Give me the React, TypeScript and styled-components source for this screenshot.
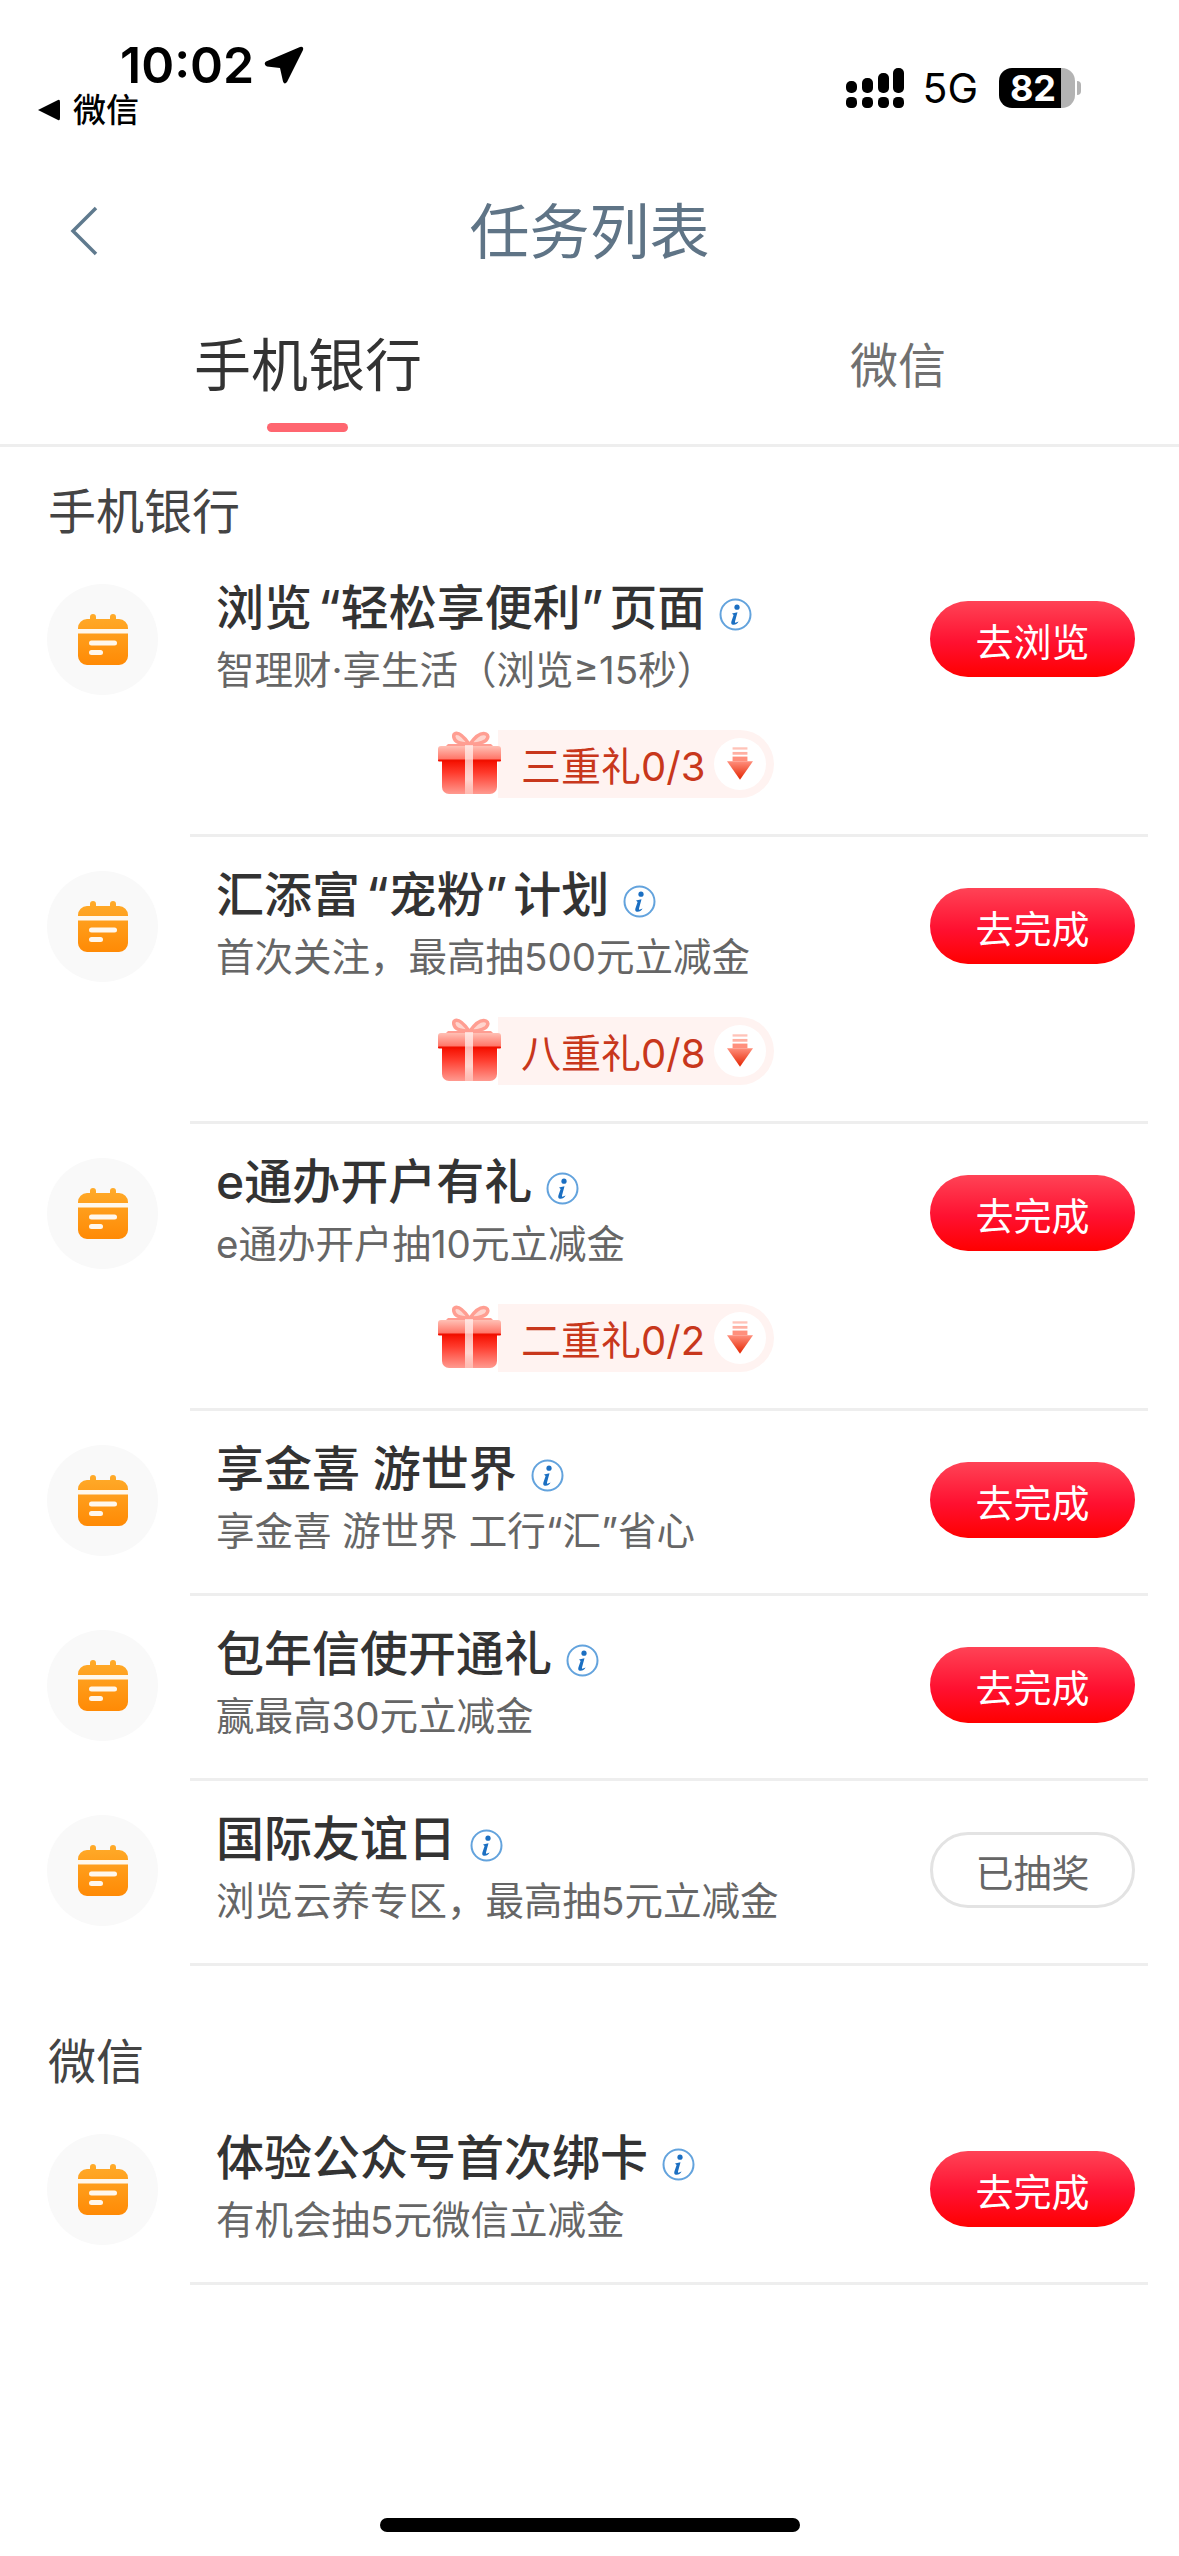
import React from "react";
import styled, { createGlobalStyle } from "styled-components";

const Global = createGlobalStyle`
  html, body { margin: 0; padding: 0; background: #fff; }
  body { font-family: Inter, "Noto Sans CJK SC", sans-serif; }
`;

const Page = styled.div`
  width: 1179px;
  min-height: 2556px;
  display: flex;
  flex-direction: column;
  background: #fff;
  overflow: hidden;
`;

const StatusBar = styled.div`
  height: 150px;
  display: flex;
  justify-content: space-between;
  align-items: flex-start;
  box-sizing: border-box;
  padding: 40px 98px 0 38px;
  color: #000;
`;
const StatusLeft = styled.div`
  display: flex;
  flex-direction: column;
`;
const TimeRow = styled.div`
  display: flex;
  align-items: center;
  gap: 10px;
  padding-left: 82px;
  height: 50px;
  font-size: 50px;
  font-weight: 600;
  line-height: 50px;
`;
const BackApp = styled.div`
  display: flex;
  align-items: center;
  gap: 13px;
  margin-top: 2px;
  font-size: 33px;
  font-weight: 500;
  line-height: 36px;
`;
const StatusRight = styled.div`
  display: flex;
  align-items: center;
  padding-top: 27px;
`;
const FiveG = styled.span`
  font-size: 41px;
  font-weight: 400;
  line-height: 42px;
  margin: 0 21px 0 18px;
`;
const Battery = styled.div`
  width: 76px;
  height: 40px;
  border-radius: 13px;
  background: linear-gradient(90deg, #000 82%, #b3b3b3 82%);
  color: #fff;
  font-size: 36px;
  font-weight: 700;
  line-height: 40px;
  text-align: center;
  padding-right: 8px;
  box-sizing: border-box;
`;
const Nub = styled.div`
  width: 4px;
  height: 14px;
  margin-left: 2px;
  border-radius: 0 7px 7px 0;
  background: #b3b3b3;
`;

const NavBar = styled.div`
  position: relative;
  height: 164px;
  display: flex;
  align-items: center;
  justify-content: center;
`;
const BackBtn = styled.div`
  position: absolute;
  left: 70px;
  top: 56px;
  display: flex;
`;
const NavTitle = styled.div`
  font-size: 60px;
  font-weight: 400;
  color: #5f7486;
  line-height: 80px;
`;

const Tabs = styled.div`
  height: 133px;
  box-sizing: border-box;
  border-bottom: 3px solid #eeeeee;
  display: flex;
  gap: 428px;
  padding-left: 194px;
`;
const Tab = styled.div<{ $active?: boolean }>`
  position: relative;
  font-size: ${(p) => (p.$active ? 57 : 48)}px;
  color: ${(p) => (p.$active ? "#333333" : "#707070")};
  font-weight: 400;
  line-height: 80px;
  height: 80px;
  margin-top: 12px;
  &::after {
    content: "";
    display: ${(p) => (p.$active ? "block" : "none")};
    position: absolute;
    left: 73px;
    top: 97px;
    width: 81px;
    height: 9px;
    border-radius: 5px;
    background: #ff6670;
  }
`;

const Section = styled.section<{ $gap?: boolean }>`
  margin-top: ${(p) => (p.$gap ? 31 : 0)}px;
`;
const SectionTitle = styled.div`
  padding: 40px 0 13px 48px;
  font-size: 48px;
  line-height: 50px;
  color: #444444;
`;

const Row = styled.div`
  display: flex;
`;
const IconCol = styled.div`
  width: 190px;
  flex: none;
  padding: 34px 0 0 47px;
  box-sizing: border-box;
`;
const IconCircle = styled.div`
  width: 111px;
  height: 111px;
  border-radius: 50%;
  background: #f9f9f9;
  display: flex;
  align-items: center;
  justify-content: center;
`;
const Body = styled.div`
  flex: 1;
  margin-right: 31px;
  border-bottom: 3px solid #eeeeee;
`;
const Top = styled.div`
  height: 182px;
  display: flex;
  justify-content: space-between;
  padding: 0 13px 0 26px;
`;
const Texts = styled.div`
  padding-top: 28px;
  min-width: 0;
`;
const TitleLine = styled.div`
  display: flex;
  align-items: center;
  gap: 14px;
  height: 60px;
`;
const Title = styled.div`
  font-size: 48px;
  font-weight: 500;
  line-height: 60px;
  color: #333333;
  white-space: nowrap;
`;
const InfoSlot = styled.div`
  display: flex;
  margin-top: 13px;
`;
const Sub = styled.div`
  margin-top: 7px;
  font-size: 38.5px;
  line-height: 50px;
  color: #666666;
  white-space: nowrap;
`;
const Quote = styled.span<{ $close?: boolean }>`
  margin: ${(p) => (p.$close ? "0 6px 0 0" : "0 0 0 6px")};
`;
const ActionBtn = styled.div<{ $done?: boolean }>`
  width: 205px;
  height: 76px;
  margin-top: 51px;
  flex: none;
  box-sizing: border-box;
  border-radius: 38px;
  display: flex;
  align-items: center;
  justify-content: center;
  font-size: 38px;
  color: ${(p) => (p.$done ? "#666666" : "#ffffff")};
  background: ${(p) =>
    p.$done ? "#fff" : "linear-gradient(180deg, #ff4356 0%, #ff1030 55%, #ff0000 100%)"};
  border: ${(p) => (p.$done ? "3px solid #e3e3e3" : "none")};
`;

const ChipRow = styled.div`
  display: flex;
  align-items: center;
  height: 70px;
  margin: -4px 0 36px 247px;
  width: fit-content;
`;
const GiftWrap = styled.div`
  width: 65px;
  height: 65px;
  flex: none;
  position: relative;
  z-index: 1;
  display: flex;
`;
const Pill = styled.div`
  display: flex;
  align-items: center;
  height: 68px;
  margin: 2px 0 0 -4px;
  padding: 0 8px 0 23px;
  border-radius: 0 34px 34px 0;
  background: #fff3f1;
  color: #c8371c;
  font-size: 40px;
  font-weight: 400;
  white-space: nowrap;
`;
const ArrowCircle = styled.div`
  width: 52px;
  height: 52px;
  margin-left: 9px;
  border-radius: 50%;
  background: #fff;
  display: flex;
  align-items: center;
  justify-content: center;
`;
const HomeBar = styled.div`
  width: 420px;
  height: 14px;
  border-radius: 7px;
  background: #000;
  margin: auto auto 24px;
`;

const CalendarIcon = () => (
  <svg width="50" height="51" viewBox="0 0 50 51">
    <defs>
      <linearGradient id="calFill" x1="0" y1="0" x2="0" y2="1">
        <stop offset="0" stopColor="#ffab2a" />
        <stop offset="1" stopColor="#ff8a05" />
      </linearGradient>
    </defs>
    <path
      d="M12 3a3 3 0 0 1 6 0v2h14V3a3 3 0 0 1 6 0v2h3a9 9 0 0 1 9 9v28a9 9 0 0 1-9 9H9a9 9 0 0 1-9-9V14a9 9 0 0 1 9-9h3z"
      fill="url(#calFill)"
    />
    <rect x="0" y="15" width="50" height="4.5" fill="#fff" fillOpacity="0.92" />
    <rect x="11" y="26.5" width="28" height="5" rx="2.5" fill="#fff" fillOpacity="0.92" />
    <rect x="11" y="36" width="14" height="5" rx="2.5" fill="#fff" fillOpacity="0.92" />
  </svg>
);

const InfoIcon = () => (
  <svg width="33" height="33" viewBox="0 0 33 33">
    <circle cx="16.5" cy="16.5" r="15" fill="#fff" stroke="#63a3dd" strokeWidth="2" />
    <circle cx="18" cy="9.2" r="2.6" fill="#1b6fc2" />
    <path
      d="M13 15.5 L18.5 14.2 L16 23.5 Q15.7 25 17 24.6 L19.6 23.4 Q17.5 27 14 26.7 Q11.6 26.2 12.4 23.4 L14.6 17 Z"
      fill="#1b6fc2"
    />
  </svg>
);

const GiftIcon = () => (
  <svg width="65" height="65" viewBox="0 0 65 65">
    <defs>
      <linearGradient id="giftBody" x1="0" y1="0" x2="0" y2="1">
        <stop offset="0" stopColor="#f51000" />
        <stop offset="0.35" stopColor="#ff3a2c" />
        <stop offset="1" stopColor="#ff9a90" />
      </linearGradient>
      <linearGradient id="giftLid" x1="0" y1="0" x2="0" y2="1">
        <stop offset="0" stopColor="#ffc0b5" />
        <stop offset="1" stopColor="#ff6a5c" />
      </linearGradient>
      <linearGradient id="giftTie" x1="0" y1="0" x2="0" y2="1">
        <stop offset="0" stopColor="#ffffff" stopOpacity="0.6" />
        <stop offset="0.7" stopColor="#ffe3de" stopOpacity="0.9" />
        <stop offset="1" stopColor="#ffc9c1" stopOpacity="0.7" />
      </linearGradient>
    </defs>
    <path
      d="M32 13 C27 6 22 1.5 18.5 2.5 C15.5 3.5 16.5 9 20.5 11 C23.5 12.5 28 13 32 13 Z M33 13 C38 6 44 1 49 3 C52.5 5 50.5 9.5 46 11 C42.5 12.5 37 13 33 13 Z"
      fill="#ffd4cd"
      stroke="#ff9e92"
      strokeWidth="3.5"
    />
    <path d="M11 13 L54 13 L56 15 L9 15 Z" fill="#ff9d92" />
    <path d="M5 30 H60 V56 a7 7 0 0 1 -7 7 H12 a7 7 0 0 1 -7 -7 Z" fill="url(#giftBody)" />
    <path d="M1 18 a3 3 0 0 1 3 -3 H61 a3 3 0 0 1 3 3 V30 H1 Z" fill="url(#giftLid)" />
    <rect x="1" y="28.5" width="63" height="2" rx="1" fill="#f01000" />
    <rect x="28" y="14" width="8" height="49" fill="url(#giftTie)" />
  </svg>
);

const ArrowIcon = () => (
  <svg width="26" height="34" viewBox="0 0 28 36">
    <defs>
      <linearGradient id="arrowFill" x1="0" y1="0" x2="0" y2="1">
        <stop offset="0" stopColor="#ff8f7c" />
        <stop offset="1" stopColor="#e42400" />
      </linearGradient>
    </defs>
    <rect x="6" y="0" width="16" height="2.5" fill="#ffc3b8" />
    <rect x="6" y="5" width="16" height="3" fill="#ffb0a2" />
    <rect x="6" y="10" width="16" height="5" fill="#ff8f7c" />
    <path d="M0 15 H28 L14 35 Z" fill="url(#arrowFill)" />
  </svg>
);

const SignalIcon = () => (
  <svg width="58" height="40" viewBox="0 0 58 40">
    <g fill="#000">
      <rect x="0" y="13" width="11" height="12" rx="5" />
      <rect x="16" y="10" width="11" height="15" rx="5" />
      <rect x="32" y="5" width="11" height="20" rx="5" />
      <rect x="47" y="0" width="11" height="25" rx="5" />
      <rect x="0" y="29" width="11" height="11" rx="4.5" />
      <rect x="16" y="29" width="11" height="11" rx="4.5" />
      <rect x="32" y="29" width="11" height="11" rx="4.5" />
      <rect x="47" y="29" width="11" height="11" rx="4.5" />
    </g>
  </svg>
);

type Task = { title: React.ReactNode; sub: React.ReactNode; btn: string; done?: boolean; chip?: string };

const bankTasks: Task[] = [
  {
    title: <>浏览<Quote>“</Quote>轻松享便利<Quote $close>”</Quote>页面</>,
    sub: "智理财·享生活（浏览≥15秒）",
    btn: "去浏览",
    chip: "三重礼0/3",
  },
  {
    title: <>汇添富<Quote>“</Quote>宠粉<Quote $close>”</Quote>计划</>,
    sub: "首次关注，最高抽500元立减金",
    btn: "去完成",
    chip: "八重礼0/8",
  },
  { title: "e通办开户有礼", sub: "e通办开户抽10元立减金", btn: "去完成", chip: "二重礼0/2" },
  { title: "享金喜 游世界", sub: "享金喜 游世界 工行“汇”省心", btn: "去完成" },
  { title: "包年信使开通礼", sub: "赢最高30元立减金", btn: "去完成" },
  { title: "国际友谊日", sub: "浏览云养专区，最高抽5元立减金", btn: "已抽奖", done: true },
];
const wechatTasks: Task[] = [
  { title: "体验公众号首次绑卡", sub: "有机会抽5元微信立减金", btn: "去完成" },
];

const TaskRow = ({ task }: { task: Task }) => (
  <Row>
    <IconCol>
      <IconCircle>
        <CalendarIcon />
      </IconCircle>
    </IconCol>
    <Body>
      <Top>
        <Texts>
          <TitleLine>
            <Title>{task.title}</Title>
            <InfoSlot>
              <InfoIcon />
            </InfoSlot>
          </TitleLine>
          <Sub>{task.sub}</Sub>
        </Texts>
        <ActionBtn $done={task.done}>{task.btn}</ActionBtn>
      </Top>
      {task.chip && (
        <ChipRow>
          <GiftWrap>
            <GiftIcon />
          </GiftWrap>
          <Pill>
            {task.chip}
            <ArrowCircle>
              <ArrowIcon />
            </ArrowCircle>
          </Pill>
        </ChipRow>
      )}
    </Body>
  </Row>
);

export default function App() {
  return (
    <Page lang="zh-CN">
      <Global />
      <StatusBar>
        <StatusLeft>
          <TimeRow>
            10:02
            <svg width="40" height="38" viewBox="0 0 40 38">
              <path
                d="M2 15.5 L36 1 Q40 0 39 4 L23 36 Q20.5 39 19 35.5 L16 22 L3 20.5 Q-1 18 2 15.5 Z"
                fill="#000"
              />
            </svg>
          </TimeRow>
          <BackApp>
            <svg width="22" height="22" viewBox="0 0 22 22">
              <path d="M0 11 L20 1 Q22 0 22 3 V19 Q22 22 20 21 Z" fill="#000" />
            </svg>
            微信
          </BackApp>
        </StatusLeft>
        <StatusRight>
          <SignalIcon />
          <FiveG>5G</FiveG>
          <Battery>82</Battery>
          <Nub />
        </StatusRight>
      </StatusBar>
      <NavBar>
        <BackBtn>
          <svg width="28" height="50" viewBox="0 0 28 50">
            <path d="M26 2 L3 25 L26 48" fill="none" stroke="#5f7a8e" strokeWidth="3.5" />
          </svg>
        </BackBtn>
        <NavTitle>任务列表</NavTitle>
      </NavBar>
      <Tabs>
        <Tab $active>手机银行</Tab>
        <Tab>微信</Tab>
      </Tabs>
      <Section>
        <SectionTitle>手机银行</SectionTitle>
        {bankTasks.map((t, i) => (
          <TaskRow key={i} task={t} />
        ))}
      </Section>
      <Section $gap>
        <SectionTitle>微信</SectionTitle>
        {wechatTasks.map((t, i) => (
          <TaskRow key={i} task={t} />
        ))}
      </Section>
      <HomeBar />
    </Page>
  );
}
